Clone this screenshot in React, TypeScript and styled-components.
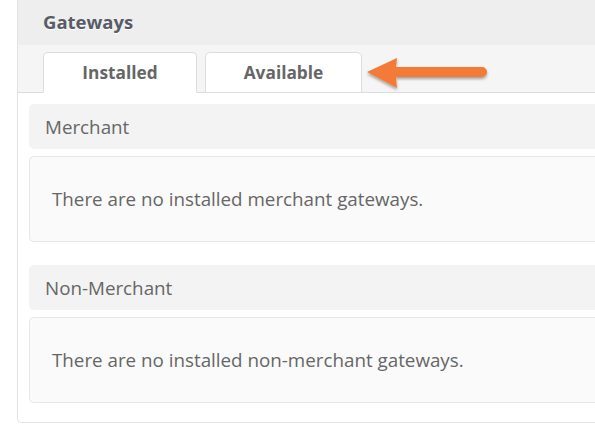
import React from "react";
import styled, { createGlobalStyle } from "styled-components";

const Global = createGlobalStyle`
  html, body { margin: 0; padding: 0; background: #ffffff; overflow: hidden; }
  body { font-family: "Open Sans", "Noto Sans", sans-serif; }
`;

const Panel = styled.div`
  margin-left: 17px;
  width: 640px;
  box-sizing: border-box;
  border-left: 1px solid #e2e2e2;
  border-bottom: 1px solid #e2e2e2;
  border-bottom-left-radius: 5px;
  display: flex;
  flex-direction: column;
`;

const Header = styled.div`
  height: 45px;
  flex-shrink: 0;
  background: #eeeeee;
  display: flex;
  align-items: center;
  padding-left: 25px;
  font-size: 18.5px;
  font-weight: 700;
  color: #575c66;
  text-shadow: 0 1px 0 #ffffff;
  box-sizing: border-box;
  padding-bottom: 2px;
`;

const TabStrip = styled.div`
  height: 48px;
  flex-shrink: 0;
  box-sizing: border-box;
  background: #f5f5f5;
  border-bottom: 1px solid #dddddd;
  display: flex;
  align-items: flex-end;
  gap: 8px;
  padding-left: 25px;
  position: relative;
`;

const Tab = styled.div<{ $active?: boolean; $w: number }>`
  width: ${(p) => p.$w}px;
  height: 41px;
  box-sizing: border-box;
  margin-bottom: -1px;
  background: #ffffff;
  border: 1px solid #dddddd;
  border-bottom-color: ${(p) => (p.$active ? "#ffffff" : "#dddddd")};
  border-radius: 5px 5px 0 0;
  display: flex;
  align-items: center;
  justify-content: center;
  font-size: 17.3px;
  font-weight: 700;
  color: #666666;
`;

const ArrowMark = styled.svg`
  position: absolute;
  left: 344px;
  top: 8px;
  overflow: visible;
`;

const Content = styled.div`
  padding: 11px 0 19px 11px;
  display: flex;
  flex-direction: column;
  gap: 23px;
`;

const Section = styled.div`
  display: flex;
  flex-direction: column;
  gap: 7px;
`;

const SectionHead = styled.div`
  height: 45px;
  background: #f3f3f3;
  border-radius: 5px 0 0 5px;
  display: flex;
  align-items: center;
  padding-left: 16px;
  font-size: 18.8px;
  color: #666666;
  box-sizing: border-box;
`;

const SectionBody = styled.div`
  height: 86px;
  box-sizing: border-box;
  background: #fafafa;
  border: 1px solid #e6e6e6;
  border-right: none;
  border-radius: 5px 0 0 5px;
  display: flex;
  align-items: center;
  padding-left: 22px;
  font-size: 18.8px;
  color: #666666;
`;

export default function App() {
  return (
    <>
      <Global />
      <Panel>
        <Header>Gateways</Header>
        <TabStrip>
          <Tab $active $w={154}>Installed</Tab>
          <Tab $w={157}>Available</Tab>
          <ArrowMark width="130" height="40" viewBox="0 0 130 40">
            <defs>
              <filter id="sh" x="-20%" y="-40%" width="140%" height="180%">
                <feDropShadow dx="0" dy="2" stdDeviation="1.6" floodColor="#000" floodOpacity="0.35" />
              </filter>
            </defs>
            <g filter="url(#sh)">
              <path d="M5 19 L35 5 L34 14 L120 14 A5 5 0 0 1 120 24 L34 24 L35 35 Z" fill="#f47a38" />
            </g>
          </ArrowMark>
        </TabStrip>
        <Content>
          <Section>
            <SectionHead>Merchant</SectionHead>
            <SectionBody>There are no installed merchant gateways.</SectionBody>
          </Section>
          <Section>
            <SectionHead>Non-Merchant</SectionHead>
            <SectionBody>There are no installed non-merchant gateways.</SectionBody>
          </Section>
        </Content>
      </Panel>
    </>
  );
}
